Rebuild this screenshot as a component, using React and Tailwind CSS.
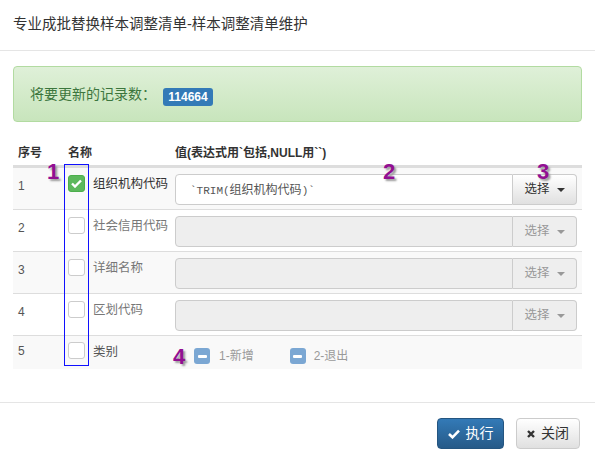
import React from "react";

const font = { fontFamily: '"Liberation Sans","Noto Sans CJK SC",sans-serif' };

function Caret({ color }) {
  return (
    <svg width="8" height="4" viewBox="0 0 8 4" className="ml-[7px]">
      <path d="M0 0 L8 0 L4 4 Z" fill={color} />
    </svg>
  );
}

function Checkbox({ checked }) {
  if (checked) {
    return (
      <div className="w-[17px] h-[17px] rounded-[3px] bg-[#5cb85c] border border-[#4cae4c] flex items-center justify-center">
        <svg width="11" height="9" viewBox="0 0 11 9">
          <path d="M1 4.5 L4 7.5 L10 1.5" stroke="white" strokeWidth="2.4" fill="none" />
        </svg>
      </div>
    );
  }
  return <div className="w-[17px] h-[17px] rounded-[3px] bg-white border border-[#ccc]" />;
}

function MinusBox() {
  return (
    <div className="w-[16px] h-[16px] rounded-[3px] bg-[#7ba7d3] flex items-center justify-center">
      <div className="w-[9px] h-[3px] bg-white rounded-[1px]" />
    </div>
  );
}

const rows = [
  { n: "1", label: "组织机构代码", checked: true, value: "`TRIM(组织机构代码)`" },
  { n: "2", label: "社会信用代码" },
  { n: "3", label: "详细名称" },
  { n: "4", label: "区划代码" },
];

function Ann({ children, className }) {
  return (
    <div
      className={
        "absolute text-[22px] leading-none font-bold text-[#920f92] [text-shadow:2px_2px_2px_#9a9a9a] " +
        className
      }
      style={font}
    >
      {children}
    </div>
  );
}

export default function App() {
  return (
    <div className="relative w-[595px] h-[462px] bg-white text-[#333] overflow-hidden" style={font}>
      {/* header */}
      <div className="h-[51px] border-b border-[#e5e5e5] pl-[13px] flex items-center">
        <span className="text-[14.5px] text-[#333]">专业成批替换样本调整清单-样本调整清单维护</span>
      </div>

      {/* body */}
      <div className="px-[13px] pt-[15px] h-[351px]">
        <div className="h-[56px] rounded-[4px] border border-[#b2dba1] bg-gradient-to-b from-[#dff0d8] to-[#c8e5bc] pl-[16px] flex items-center">
          <span className="text-[14px] text-[#3c763d]">将要更新的记录数：</span>
          <span className="ml-[7px] mt-[5px] h-[18px] w-[50px] rounded-[3px] bg-[#337ab7] text-white text-[12px] font-bold flex items-center justify-center">
            114664
          </span>
        </div>

        {/* table */}
        <div className="mt-[18px]">
          <div className="grid grid-cols-[50px_107px_1fr] h-[27px] border-b-2 border-[#ddd] text-[12px] font-bold text-[#333] items-center">
            <div className="pl-[5px]">序号</div>
            <div className="pl-[5px]">名称</div>
            <div className="pl-[5px]">值(表达式用`包括,NULL用``)</div>
          </div>

          {rows.map((r, i) => (
            <div
              key={r.n}
              className={
                "grid grid-cols-[50px_107px_1fr] h-[42px] border-t border-[#ddd] " +
                (i % 2 === 0 ? "bg-[#f9f9f9]" : "bg-white")
              }
            >
              <div className="pl-[5px] pt-[9px] text-[12px] text-[#555]">{r.n}</div>
              <div className="pl-[5px] pt-[7px] flex items-start">
                <Checkbox checked={r.checked} />
                <span className={"ml-[8px] mt-[-1px] text-[12.5px] leading-[20px] " + (r.checked ? "text-[#333]" : "text-[#777]")}>
                  {r.label}
                </span>
              </div>
              <div className="px-[5px] pt-[6px]">
                <div className="flex h-[31px]">
                  {r.checked ? (
                    <>
                      <div className="flex-1 border border-[#ccc] rounded-l-[4px] bg-white pl-[14px] flex items-center text-[12px] text-[#555]">
                        <span style={{ fontFamily: '"Liberation Mono","Noto Sans CJK SC",monospace' }} className="text-[11px]">
                          `TRIM(<span style={{ fontFamily: '"Noto Sans CJK SC",sans-serif' }} className="text-[12px]">组织机构代码</span>)`
                        </span>
                      </div>
                      <div className="w-[64px] border border-l-0 border-[#ccc] rounded-r-[4px] bg-gradient-to-b from-white to-[#e0e0e0] flex items-center justify-center text-[12.5px] text-[#333]">
                        选择
                        <Caret color="#333" />
                      </div>
                    </>
                  ) : (
                    <>
                      <div className="flex-1 border border-[#ccc] rounded-l-[4px] bg-[#eee]" />
                      <div className="w-[64px] border border-l-0 border-[#ccc] rounded-r-[4px] bg-[#eee] flex items-center justify-center text-[12.5px] text-[#999]">
                        选择
                        <Caret color="#999" />
                      </div>
                    </>
                  )}
                </div>
              </div>
            </div>
          ))}

          <div className="grid grid-cols-[50px_107px_1fr] h-[34px] border-t border-[#ddd] bg-[#f9f9f9]">
            <div className="pl-[5px] pt-[6px] text-[12px] text-[#555]">5</div>
            <div className="pl-[5px] pt-[6px] flex items-start">
              <Checkbox />
              <span className="ml-[8px] mt-[0px] text-[12.5px] leading-[20px] text-[#555]">类别</span>
            </div>
            <div className="pl-[24px] pt-[11px] flex items-start text-[12px] text-[#999]">
              <div className="flex items-center">
                <MinusBox />
                <span className="ml-[9px]">1-新增</span>
              </div>
              <div className="flex items-center ml-[36px]">
                <MinusBox />
                <span className="ml-[8px]">2-退出</span>
              </div>
            </div>
          </div>
        </div>
      </div>

      {/* footer */}
      <div className="border-t border-[#e5e5e5] pt-[15px] pr-[15px] flex justify-end gap-[12px]">
        <div className="w-[67px] h-[31px] rounded-[4px] border border-[#245580] bg-gradient-to-b from-[#337ab7] to-[#265a88] text-white text-[14px] flex items-center justify-center">
          <svg width="12" height="10" viewBox="0 0 12 10" className="mr-[6px]">
            <path d="M1 5 L4.5 8.3 L11 1.7" stroke="white" strokeWidth="2.6" fill="none" />
          </svg>
          执行
        </div>
        <div className="w-[64px] h-[31px] rounded-[4px] border border-[#ccc] bg-gradient-to-b from-white to-[#e0e0e0] text-[#333] text-[14px] flex items-center justify-center">
          <svg width="8" height="8" viewBox="0 0 8 8" className="mr-[6px]">
            <path d="M1 1 L7 7 M7 1 L1 7" stroke="#333" strokeWidth="2.4" />
          </svg>
          关闭
        </div>
      </div>

      {/* annotations */}
      <div className="absolute left-[64px] top-[164px] w-[25px] h-[202px] border border-[#1010ff]" />
      <Ann className="left-[47px] top-[161px]">1</Ann>
      <Ann className="left-[383px] top-[161px]">2</Ann>
      <Ann className="left-[537px] top-[161px]">3</Ann>
      <Ann className="left-[173px] top-[346px]">4</Ann>
    </div>
  );
}
